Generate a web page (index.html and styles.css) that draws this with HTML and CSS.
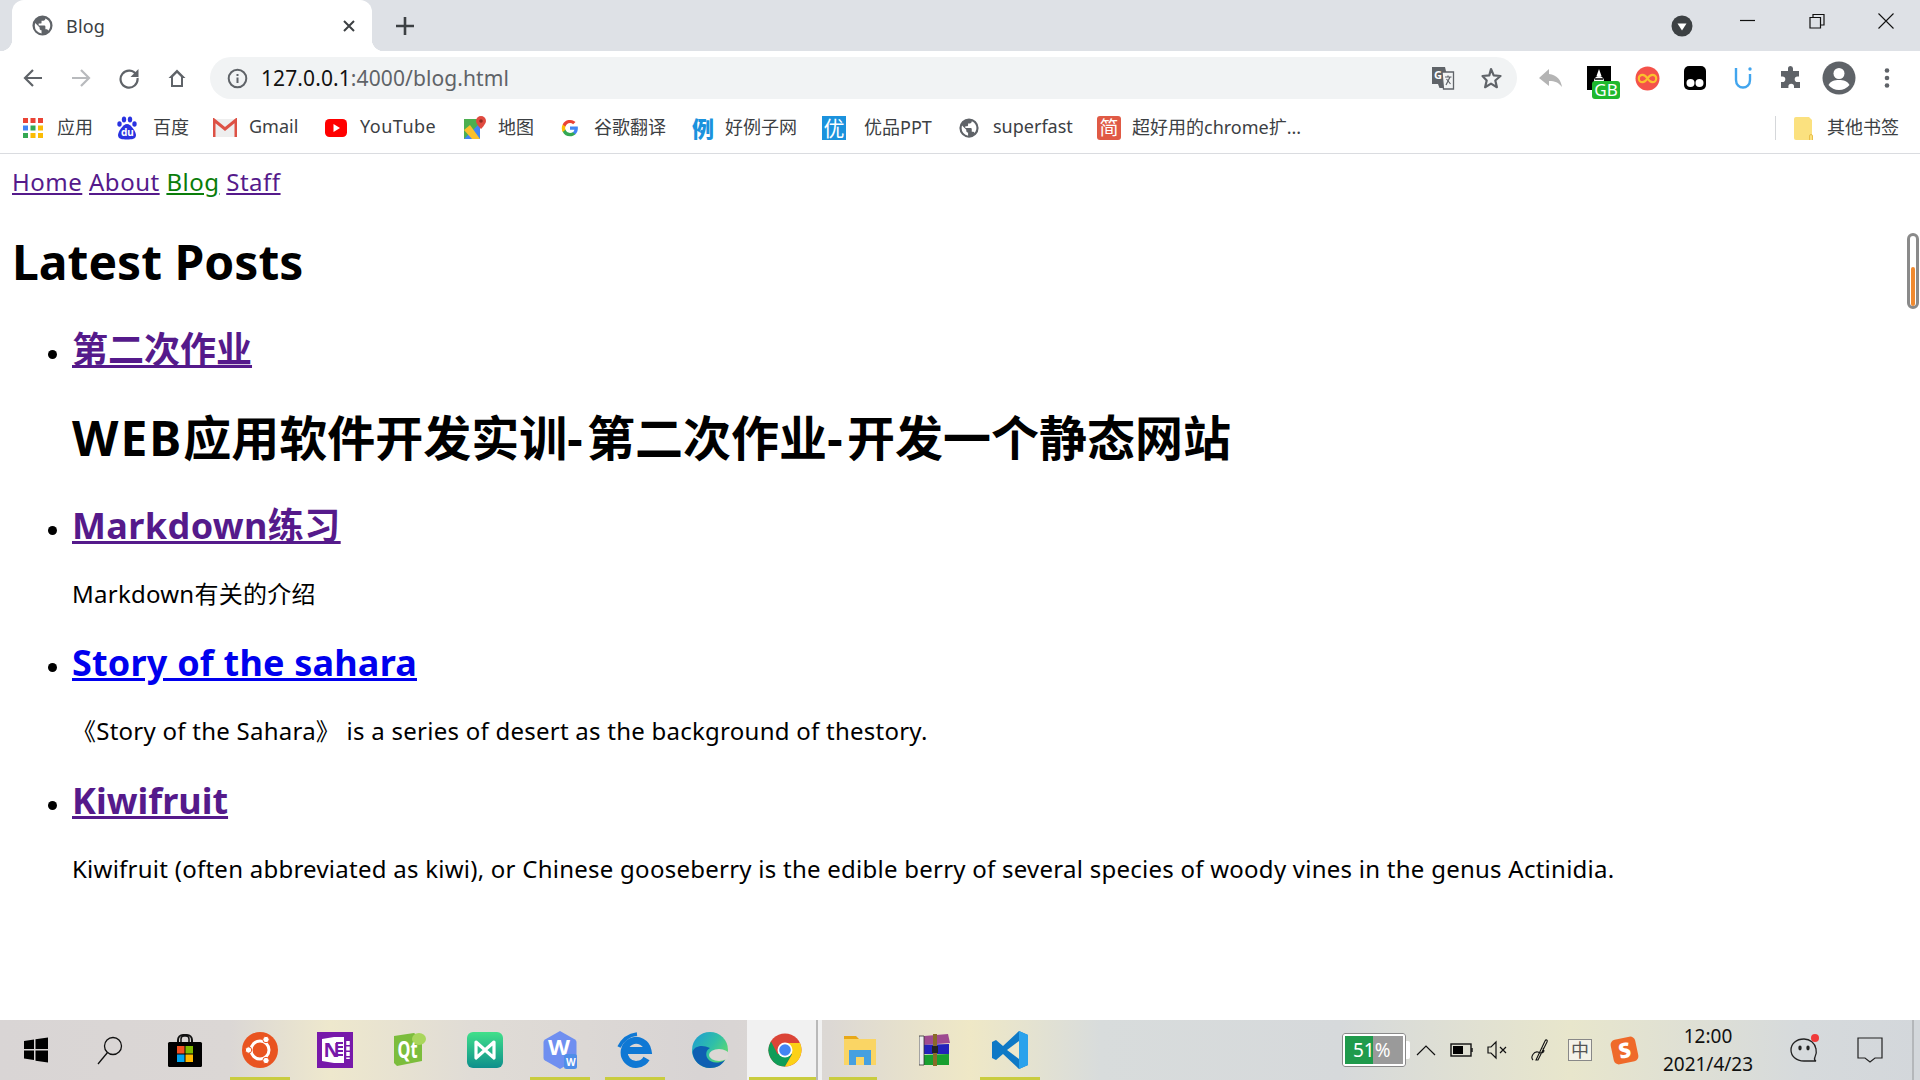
FILE: index.html
```html
<!DOCTYPE html>
<html lang="zh-CN">
<head>
<meta charset="utf-8">
<title>Blog</title>
<link rel="stylesheet" href="styles.css">
</head>
<body>
<div class="chrome">
  <div class="tabstrip">
    <div class="tab">
      <svg class="tab-fav" width="23" height="23" viewBox="0 0 24 24"><path fill="#5f6368" d="M12 1.500a10.500 10.500 0 1 0 0 21 10.500 10.500 0 0 0 0-21zM4 12c0-.9.2-1.800.4-2.600L9 14v1c0 1.100.9 2 2 2v3.400A8 8 0 0 1 4 12zm14 5.400c-.3-.8-1-1.400-1.900-1.400H15v-3c0-.6-.4-1-1-1H8v-2h2c.6 0 1-.4 1-1V7h2c1.100 0 2-.9 2-2v-.4a8 8 0 0 1 3 12.800z"/></svg>
      <span class="tab-title">Blog</span>
      <svg class="tab-close" width="14" height="14" viewBox="0 0 14 14"><path d="M2 2l10 10M12 2L2 12" stroke="#3c4043" stroke-width="2" fill="none"/></svg>
    </div>
    <svg class="newtab" width="20" height="20" viewBox="0 0 20 20"><path d="M10 1v18M1 10h18" stroke="#3c4043" stroke-width="2.600" fill="none"/></svg>
    <div class="tab-search">
      <svg width="22" height="22" viewBox="0 0 22 22"><circle cx="11" cy="11" r="10.500" fill="#3c4043"/><path d="M6.500 8.500h9L11 15.500z" fill="#fff"/></svg>
    </div>
    <div class="caption">
      <svg width="16" height="16" viewBox="0 0 16 16"><path d="M0 7.500h15" stroke="#111" stroke-width="1.200"/></svg>
    </div>
    <div class="caption">
      <svg width="16" height="16" viewBox="0 0 16 16"><path d="M1 4.500h10.500V15H1zM4 4.500V1.500h11V12h-3.500" stroke="#111" stroke-width="1.200" fill="none"/></svg>
    </div>
    <div class="caption">
      <svg width="16" height="16" viewBox="0 0 16 16"><path d="M.5.500l15 15M15.500.500l-15 15" stroke="#111" stroke-width="1.100" fill="none"/></svg>
    </div>
  </div>

  <div class="toolbar">
    <div class="tool-btn"><svg width="22" height="22" viewBox="0 0 22 22"><path d="M20 11H3M11 3l-8 8 8 8" stroke="#5f6368" stroke-width="2.200" fill="none"/></svg></div>
    <div class="tool-btn"><svg width="22" height="22" viewBox="0 0 22 22"><path d="M2 11h17M11 3l8 8-8 8" stroke="#b8babd" stroke-width="2.200" fill="none"/></svg></div>
    <div class="tool-btn"><svg width="22" height="22" viewBox="0 0 22 22"><path d="M18.500 8A8.500 8.500 0 1 0 19.500 11" stroke="#5f6368" stroke-width="2.200" fill="none"/><path d="M20.500 2v8h-8z" fill="#5f6368"/></svg></div>
    <div class="tool-btn"><svg width="22" height="22" viewBox="0 0 22 22"><path d="M11 2.500L2.500 11H5v9h12v-9h2.500zM7 18v-8l4-4 4 4v8z" fill="#5f6368"/></svg></div>
    <div class="omnibox">
      <svg class="omni-info" width="21" height="21" viewBox="0 0 21 21"><circle cx="10.500" cy="10.500" r="8.800" stroke="#5f6368" stroke-width="2" fill="none"/><path d="M10.500 9.500v5.500M10.500 6v2" stroke="#5f6368" stroke-width="2"/></svg>
      <span class="url"><span class="url-host">127.0.0.1</span>:4000/blog.html</span>
      <svg class="omni-trans" width="24" height="24" viewBox="0 0 24 24"><path d="M1 1h13l5 21H8.500L7 18H1z" fill="#5f6368"/><path d="M11 6h11.500v17H12.500z" fill="#f1f3f4" stroke="#5f6368" stroke-width="1.300"/><text class="trans-g" x="3" y="13">G</text><path d="M14 11h6.500M17 9.500v1.500M15 19l4-8M15.500 13l4 5" stroke="#5f6368" stroke-width="1.200" fill="none"/></svg>
      <svg class="omni-star" width="24" height="24" viewBox="0 0 24 24"><path d="M12 3l2.700 6.400 6.800.6-5.200 4.500 1.600 6.700-5.900-3.600-5.900 3.600 1.600-6.700L3.500 10l6.800-.6z" stroke="#5f6368" stroke-width="2.200" fill="none" stroke-linejoin="round"/></svg>
    </div>
    <div class="tool-btn"><svg width="26" height="24" viewBox="0 0 26 24"><path d="M11 3L1 12l10 8v-5c6 0 9.500 1.500 13 6-1-7-5-12-13-13z" fill="#b4b4b4"/></svg></div>
    <div class="tool-btn ext-gb">
      <svg width="24" height="24" viewBox="0 0 24 24"><rect width="24" height="24" fill="#000"/><path d="M12 3l2.500 7h-5zM7 15a5 5 0 0 1 10 0v6H7z" fill="#fff"/><path d="M8 13h8" stroke="#000" stroke-width="1.500"/></svg>
      <span class="gb-badge">GB</span>
    </div>
    <div class="tool-btn"><svg width="25" height="25" viewBox="0 0 25 25"><circle cx="12.500" cy="12.500" r="12" fill="#f4524a"/><path d="M12.500 12.500c-2-3-3.500-3.700-5-3.700a3.700 3.700 0 0 0 0 7.400c1.500 0 3-.7 5-3.700s3.500-3.700 5-3.700a3.700 3.700 0 0 1 0 7.400c-1.500 0-3-.7-5-3.700z" stroke="#fbc02d" stroke-width="2.200" fill="none"/></svg></div>
    <div class="tool-btn"><svg width="24" height="26" viewBox="0 0 24 26"><rect x="1" y="1" width="22" height="24" rx="5" fill="#000"/><circle cx="7.500" cy="18" r="4" fill="#fff"/><circle cx="16.500" cy="18" r="4" fill="#fff"/></svg></div>
    <div class="tool-btn"><svg width="20" height="26" viewBox="0 0 20 26"><path d="M3 3v12c0 10 14 10 14 0V9" stroke="#41a5ee" stroke-width="2.400" fill="none"/><circle cx="17" cy="4" r="1.700" fill="#41a5ee"/></svg></div>
    <div class="tool-btn"><svg width="24" height="24" viewBox="0 0 24 24"><path d="M9 2.500a2.500 2.500 0 0 1 5 0V5h6v5.500h-1.500a2.800 2.800 0 0 0 0 5.600H21V22h-6v-1.500a2.800 2.800 0 0 0-5.600 0V22H2v-6h1.500a2.800 2.800 0 0 0 0-5.600H2V5h7z" fill="#5f6368"/></svg></div>
    <div class="tool-btn"><svg width="34" height="34" viewBox="0 0 34 34"><circle cx="17" cy="17" r="16.500" fill="#5f6368"/><circle cx="17" cy="12.500" r="5.500" fill="#fff"/><path d="M6.500 24c2-4 6-5 10.500-5s8.500 1 10.500 5a13.500 13.500 0 0 1-21 0z" fill="#fff"/></svg></div>
    <div class="tool-btn"><svg width="8" height="24" viewBox="0 0 8 24"><circle cx="4" cy="4.500" r="2.300" fill="#5f6368"/><circle cx="4" cy="12" r="2.300" fill="#5f6368"/><circle cx="4" cy="19.500" r="2.300" fill="#5f6368"/></svg></div>
  </div>

  <div class="bookmarks">
    <div class="bm bm-apps">
      <svg width="20" height="20" viewBox="0 0 20 20"><g fill="#ea4335"><rect width="5" height="5"/><rect x="7.500" width="5" height="5"/><rect x="15" width="5" height="5"/></g><g><rect y="7.500" width="5" height="5" fill="#4285f4"/><rect x="7.500" y="7.500" width="5" height="5" fill="#34a853"/><rect x="15" y="7.500" width="5" height="5" fill="#fbbc05"/></g><g><rect y="15" width="5" height="5" fill="#34a853"/><rect x="7.500" y="15" width="5" height="5" fill="#fbbc05"/><rect x="15" y="15" width="5" height="5" fill="#fbbc05"/></g></svg>
      <span>应用</span>
    </div>
    <div class="bm bm-baidu">
      <svg width="20" height="24" viewBox="0 0 20 24"><g fill="#2932e1"><ellipse cx="7" cy="3.500" rx="2.200" ry="3"/><ellipse cx="13" cy="3.500" rx="2.200" ry="3"/><ellipse cx="2.500" cy="8" rx="2.200" ry="2.800"/><ellipse cx="17.500" cy="8" rx="2.200" ry="2.800"/><path d="M10 8c4 0 9 8 9 11 0 4-4 4.500-9 4.500S1 23 1 19c0-3 5-11 9-11z"/></g></svg>
      <span class="du">du</span>
      <span>百度</span>
    </div>
    <div class="bm bm-gmail">
      <svg width="24" height="20" viewBox="0 0 24 20"><rect x="1" y="1" width="22" height="18" fill="#eee"/><path d="M1 19V2l11 9 11-9v17" stroke="#dd5145" stroke-width="3" fill="none"/></svg>
      <span>Gmail</span>
    </div>
    <div class="bm bm-yt">
      <svg width="22" height="18" viewBox="0 0 22 18"><rect width="22" height="18" rx="4.500" fill="#f00"/><path d="M8.500 5v8l6.500-4z" fill="#fff"/></svg>
      <span>YouTube</span>
    </div>
    <div class="bm bm-maps">
      <svg width="23" height="24" viewBox="0 0 23 24"><path d="M1 3h16v20H1z" fill="#4caf50"/><path d="M1 23L17 7v16z" fill="#4285f4"/><path d="M1 14l6-5 10 14H9z" fill="#fbc02d"/><path d="M18 0a5 5 0 0 1 5 5c0 3-5 8-5 8s-5-5-5-8a5 5 0 0 1 5-5z" fill="#e04a3f"/><circle cx="18" cy="5" r="1.800" fill="#8f2a22"/></svg>
      <span>地图</span>
    </div>
    <div class="bm bm-g">
      <svg width="18" height="18" viewBox="0 0 48 48"><path fill="#4285f4" d="M45 24.500c0-1.600-.1-3.100-.4-4.500H24v8.500h11.800a10 10 0 0 1-4.400 6.600v5.500h7.100C42.700 36.700 45 31.100 45 24.500z"/><path fill="#34a853" d="M24 46c5.900 0 10.900-2 14.500-5.400l-7.100-5.500c-2 1.300-4.500 2.100-7.400 2.100-5.700 0-10.500-3.800-12.200-9H4.500v5.700A22 22 0 0 0 24 46z"/><path fill="#fbbc05" d="M11.800 28.700a13 13 0 0 1 0-8.400v-5.700H4.500a22 22 0 0 0 0 19.800z"/><path fill="#ea4335" d="M24 10.900c3.200 0 6.100 1.100 8.400 3.300l6.300-6.300A22 22 0 0 0 4.500 14.600l7.300 5.700c1.700-5.200 6.500-9.400 12.200-9.400z"/></svg>
      <span>谷歌翻译</span>
    </div>
    <div class="bm bm-li">
      <span class="glyph-li">例</span>
      <span>好例子网</span>
    </div>
    <div class="bm bm-you">
      <span class="glyph-you">优</span>
      <span>优品PPT</span>
    </div>
    <div class="bm bm-sf">
      <svg width="22" height="22" viewBox="0 0 24 24"><path fill="#5f6368" d="M12 1.500a10.500 10.500 0 1 0 0 21 10.500 10.500 0 0 0 0-21zM4 12c0-.9.2-1.800.4-2.600L9 14v1c0 1.100.9 2 2 2v3.400A8 8 0 0 1 4 12zm14 5.400c-.3-.8-1-1.400-1.900-1.400H15v-3c0-.6-.4-1-1-1H8v-2h2c.6 0 1-.4 1-1V7h2c1.100 0 2-.9 2-2v-.4a8 8 0 0 1 3 12.800z"/></svg>
      <span>superfast</span>
    </div>
    <div class="bm bm-jian">
      <span class="glyph-jian">简</span>
      <span>超好用的chrome扩...</span>
    </div>
    <div class="bm-sep"></div>
    <div class="bm bm-other">
      <svg width="19" height="23" viewBox="0 0 19 23"><path d="M2 0h13l3 3v20H2a2 2 0 0 1-2-2V2a2 2 0 0 1 2-2z" fill="#fbe17f"/><path d="M15.500 23v-4a1.500 1.500 0 0 1 3 0v4" fill="none" stroke="#e9bf4b"/></svg>
      <span>其他书签</span>
    </div>
  </div>
</div>

<main class="page">
  <nav class="nav">
    <a class="visited" href="#home">Home</a>
    <a class="visited" href="#about">About</a>
    <a class="active" href="#blog">Blog</a>
    <a class="visited" href="#staff">Staff</a>
  </nav>
  <h1 class="heading">Latest Posts</h1>
  <ul class="posts">
    <li>
      <h2 class="post-title"><a class="visited" href="#p1">第二次作业</a></h2>
      <h1 class="heading"><span class="latin-w">WEB</span>应用软件开发实训<span class="hy">-</span>第二次作业<span class="hy">-</span>开发一个静态网站</h1>
    </li>
    <li>
      <h2 class="post-title"><a class="visited md" href="#p2">Markdown练习</a></h2>
      <p class="excerpt">Markdown有关的介绍</p>
    </li>
    <li>
      <h2 class="post-title"><a class="fresh" href="#p3">Story of the sahara</a></h2>
      <p class="excerpt">《Story of the Sahara》 is a series of desert as the background of thestory.</p>
    </li>
    <li>
      <h2 class="post-title"><a class="visited" href="#p4">Kiwifruit</a></h2>
      <p class="excerpt">Kiwifruit (often abbreviated as kiwi), or Chinese gooseberry is the edible berry of several species of woody vines in the genus Actinidia.</p>
    </li>
  </ul>
  <div class="scroll-thumb"><div class="scroll-fill"></div></div>
</main>

<footer class="taskbar">
  <div class="tb-start"><svg width="26" height="26" viewBox="0 0 26 26"><path d="M1 4l10-1.500V12H1zM12.500 2.300L25 .5V12H12.500zM1 13.500h10V23L1 21.500zM12.500 13.500H25v12l-12.500-1.800z" fill="#000"/></svg></div>
  <div class="tb-search"><svg width="26" height="30" viewBox="0 0 26 30"><circle cx="16" cy="11" r="8.500" stroke="#111" stroke-width="1.300" fill="none"/><path d="M10.500 17.500L1 29" stroke="#111" stroke-width="1.300"/></svg></div>
  <div class="tb-app"><svg width="36" height="36" viewBox="0 0 36 36"><path d="M11 11V8a5 5 0 0 1 5-5h4a5 5 0 0 1 5 5v3" stroke="#111" stroke-width="2" fill="none"/><path d="M14 11V7a3 3 0 0 1 3-3h2a3 3 0 0 1 3 3v4" stroke="#111" stroke-width="1.500" fill="none"/><rect x="1" y="10" width="34" height="25" rx="1.500" fill="#000"/><rect x="10" y="14" width="7.500" height="7.500" fill="#f25022"/><rect x="18.500" y="14" width="7.500" height="7.500" fill="#7fba00"/><rect x="10" y="22.500" width="7.500" height="7.500" fill="#00a4ef"/><rect x="18.500" y="22.500" width="7.500" height="7.500" fill="#ffb900"/></svg></div>
  <div class="tb-app on"><svg width="36" height="36" viewBox="0 0 36 36"><circle cx="18" cy="18" r="18" fill="#e95420"/><circle cx="18" cy="18" r="9" stroke="#fff" stroke-width="3" fill="none"/><circle cx="6.500" cy="18" r="3.200" fill="#fff" stroke="#e95420"/><circle cx="24" cy="7.500" r="3.200" fill="#fff" stroke="#e95420"/><circle cx="24" cy="28.500" r="3.200" fill="#fff" stroke="#e95420"/></svg></div>
  <div class="tb-app"><svg width="36" height="36" viewBox="0 0 36 36"><rect width="36" height="36" fill="#7719aa"/><path d="M5 7l12-2h10v26H17L5 29z" fill="#fff"/><path d="M31 9v18" stroke="#fff" stroke-width="3.500" stroke-dasharray="4 1.500"/><path d="M19 11h7M19 15h7M19 19h7M19 23h7" stroke="#7719aa" stroke-width="1.800"/><text class="on-n" x="6.500" y="25">N</text></svg></div>
  <div class="tb-app"><svg width="36" height="36" viewBox="0 0 36 36"><path d="M2 4L22 1l8 6v22L5 34l-3-3z" fill="#7cbd3c"/><ellipse cx="27" cy="7" rx="7" ry="6" fill="#a9d65c"/><text class="qt-t" x="5.500" y="26" textLength="20" lengthAdjust="spacingAndGlyphs">Qt</text></svg></div>
  <div class="tb-app"><svg width="36" height="36" viewBox="0 0 36 36"><defs><linearGradient id="nim" x1="0" y1="0" x2="0" y2="1"><stop offset="0" stop-color="#41e08a"/><stop offset="1" stop-color="#0e8f8c"/></linearGradient></defs><rect width="36" height="36" rx="6" fill="url(#nim)"/><path d="M9 10L27 26V10L9 26z" stroke="#fff" stroke-width="3.200" fill="none" stroke-linejoin="round"/></svg></div>
  <div class="tb-app on"><svg width="34" height="38" viewBox="0 0 34 38"><path d="M17 0l15 8.500q1.500 1 1.500 2.500v16q0 1.500-1.500 2.500L17 38 2 29.500Q.5 28.500.5 27V11q0-1.500 1.500-2.500z" fill="#6f8ff0"/><text class="wps-w" x="5" y="24" textLength="22" lengthAdjust="spacingAndGlyphs">W</text><rect x="21" y="23" width="13" height="15" rx="2.500" fill="#4f8ee8"/><text class="wps-s" x="23" y="35">W</text></svg></div>
  <div class="tb-app on"><svg width="36" height="36" viewBox="0 0 36 36"><path d="M2 15C6 7 12 3 20 2" stroke="#0f78d4" stroke-width="3.500" fill="none"/><path d="M29.500 26.500A12 12 0 1 1 31 18.500H8.500" stroke="#0f78d4" stroke-width="7" fill="none"/></svg></div>
  <div class="tb-app"><svg width="36" height="36" viewBox="0 0 36 36"><defs><linearGradient id="edge" x1="0" y1="0" x2="1" y2=".7"><stop offset="0" stop-color="#1d9ad6"/><stop offset=".55" stop-color="#2fbfa8"/><stop offset="1" stop-color="#66dc68"/></linearGradient></defs><circle cx="18" cy="18" r="18" fill="url(#edge)"/><ellipse cx="27" cy="23" rx="10" ry="6" fill="#dcd8d5"/><path d="M.5 20C1 29 9 36 18 36c7 0 12-3 15-8-7 4-14 3-17-1-3-4-2-9 2-11C10 12 2 14 .5 20z" fill="#0e5fb2"/></svg></div>
  <div class="tb-app active"><svg width="34" height="34" viewBox="0 0 34 34"><circle cx="17" cy="17" r="16.500" fill="#db4437"/><path d="M17 17L2.800 25.500A16.500 16.500 0 0 0 17 33.500l7-12z" fill="#0f9d58"/><path d="M3 8.500A16.500 16.500 0 0 0 2.800 25.500L10 22z" fill="#0f9d58"/><path d="M17 10h15a16.500 16.500 0 0 1-15 23.500l7-12z" fill="#fcd116"/><circle cx="17" cy="17" r="7.500" fill="#fff"/><circle cx="17" cy="17" r="5.800" fill="#4285f4"/></svg></div>
  <div class="tb-divider"></div>
  <div class="tb-app on-short"><svg width="32" height="32" viewBox="0 0 32 32"><path d="M0 2h12l3 3H0z" fill="#e8a818"/><rect y="5" width="32" height="26" fill="#fad564"/><path d="M5 31V16h22v15h-7v-8h-8v8z" fill="#46a0e0"/></svg></div>
  <div class="tb-app"><svg width="32" height="34" viewBox="0 0 32 34"><path d="M5 3l24-2 2 9-26 2z" fill="#9e4a90"/><path d="M1 12l29-1v10H1z" fill="#2222bb"/><path d="M1 22l29-1v11H1z" fill="#18a030"/><path d="M0 3h5v29H0z" fill="#eee" stroke="#333" stroke-width=".8"/><path d="M14 1h4v32h-4z" fill="#8a6a28"/><rect x="13" y="13" width="6" height="7" fill="#222"/></svg></div>
  <div class="tb-app on"><svg width="36" height="38" viewBox="0 0 36 38"><path d="M27 0l9 4v30l-9 4L11 23l-7 6-4-2V11l4-2 7 6z" fill="#0e79c6"/><path d="M27 0l9 4v30l-9 4z" fill="#2ba2ec"/><path d="M27 10L15 19l12 9z" fill="#ece8cc"/></svg></div>
  <div class="tray">
    <div class="batt"><div class="batt-fill"></div><span class="batt-text">51%</span><i class="batt-nub"></i></div>
    <div class="t36"><svg width="20" height="12" viewBox="0 0 20 12"><path d="M1 11l9-9 9 9" stroke="#111" stroke-width="1.200" fill="none"/></svg></div>
    <div class="t36"><svg width="24" height="14" viewBox="0 0 24 14"><rect x="1" y="1" width="20" height="12" fill="none" stroke="#111" stroke-width="1.400"/><rect x="3" y="3" width="10" height="8" fill="#000"/><path d="M22 5v4" stroke="#111" stroke-width="1.400"/></svg></div>
    <div class="t36"><svg width="22" height="20" viewBox="0 0 22 20"><path d="M1 7v6h3l5 5V2L4 7z" stroke="#111" stroke-width="1.200" fill="none"/><path d="M13 7l6 6M19 7l-6 6" stroke="#111" stroke-width="1.200"/></svg></div>
    <div class="t50"><svg width="22" height="24" viewBox="0 0 22 24"><path d="M3 22c-3-3 1-9 5-8l2 1c4 0 5-2 3-5M6 22L15 3c1-2 3-1 2 1L8 22z" stroke="#111" stroke-width="1.100" fill="none"/></svg></div>
    <div class="t28 zh"><span>中</span></div>
    <div class="t60"><div class="sogou"><span>S</span></div></div>
    <div class="clock"><span>12:00</span><span>2021/4/23</span></div>
    <div class="t86"><svg width="32" height="32" viewBox="0 0 32 32"><path d="M15 5C7 5 2 10 2 16s5 11 13 11h12c-2-1-2-2-1-4 1-2 2-4 1-8-1-6-6-10-12-10z" stroke="#222" stroke-width="1.300" fill="none"/><ellipse cx="11" cy="14" rx="1.700" ry="2.400" fill="#222"/><ellipse cx="19" cy="14" rx="1.700" ry="2.400" fill="#222"/><circle cx="26" cy="4" r="4" fill="#f03a3a"/></svg></div>
    <div class="t44"><svg width="26" height="26" viewBox="0 0 26 26"><path d="M1 1h24v20h-7l-5 4-5-4H1z" stroke="#222" stroke-width="1.200" fill="none"/></svg></div>
    <div class="desk-line"></div>
  </div>
</footer>
</body>
</html>
```

FILE: styles.css
```css
* { box-sizing: border-box; }
html, body { margin: 0; height: 100%; }
body {
  display: flex;
  flex-direction: column;
  height: 100vh;
  overflow: hidden;
  background: #fff;
  font-family: "Noto Sans", "Noto Sans CJK SC", sans-serif;
  color: #000;
}
svg { display: block; flex: none; }
svg text { font-family: "Noto Sans", sans-serif; }

/* browser chrome */
.chrome { flex: none; }
.tabstrip { display: flex; align-items: center; height: 51px; background: #dee1e6; }
.tab {
  position: relative;
  display: flex;
  align-items: center;
  width: 360px;
  height: 51px;
  margin: 0 0 0 12px;
  padding: 0 16px 0 19px;
  background: #fff;
  border-radius: 12px 12px 0 0;
}
.tab::before, .tab::after {
  content: "";
  position: absolute;
  bottom: 0;
  width: 12px;
  height: 12px;
}
.tab::before { left: -12px; background: radial-gradient(circle at 0 0, transparent 12px, #fff 12.500px); }
.tab::after { right: -12px; background: radial-gradient(circle at 100% 0, transparent 12px, #fff 12.500px); }
.tab-fav { margin-right: 12px; }
.tab-title { flex: 1; font-size: 18px; letter-spacing: .2px; color: #3c4043; }
.newtab { margin-left: 23px; }
.tab-search { display: flex; justify-content: center; margin-left: auto; margin-right: 10px; width: 42px; }
.caption { display: flex; justify-content: center; align-items: center; width: 69px; height: 40px; margin-bottom: 10px; }

.toolbar { display: flex; align-items: center; height: 52px; padding: 2px 9px 0; background: #fff; }
.tool-btn { display: flex; justify-content: center; align-items: center; width: 48px; height: 48px; position: relative; }
.omnibox {
  flex: 1;
  display: flex;
  align-items: center;
  height: 42px;
  margin: 0 10px 0 9px;
  padding: 0 14px 0 17px;
  background: #f1f3f4;
  border-radius: 21px;
}
.omni-info { margin-right: 13px; }
.url { flex: 1; font-size: 21px; letter-spacing: .1px; color: #5f6368; }
.url-host { color: #111; }
.trans-g { font-size: 11px; font-weight: 700; fill: #fff; }
.omni-star { margin-left: 24px; }
.gb-badge {
  position: absolute;
  left: 17px;
  top: 27px;
  width: 28px;
  height: 18px;
  background: #1fb82d;
  border-radius: 3px;
  color: #fff;
  font-size: 17px;
  line-height: 18px;
  text-align: center;
}

.bookmarks {
  display: flex;
  align-items: center;
  height: 51px;
  padding-left: 23px;
  background: #fff;
  border-bottom: 1px solid #dadce0;
  font-size: 18px;
  color: #3c4043;
}
.bm { display: flex; align-items: center; position: relative; flex: none; white-space: nowrap; }
.bm > span:last-child { margin-top: -4px; }
.bm-apps { width: 94px; gap: 14px; }
.bm-baidu { width: 96px; gap: 16px; }
.bm-gmail { width: 112px; gap: 12px; }
.bm-yt { width: 138px; gap: 13px; letter-spacing: .5px; }
.bm-maps { width: 98px; gap: 12px; }
.bm-g { width: 131px; gap: 15px; }
.bm-li { width: 130px; gap: 11px; }
.bm-you { width: 136px; gap: 18px; }
.bm-sf { width: 139px; gap: 13px; }
.bm-jian { width: 205px; gap: 11px; }
.du {
  position: absolute;
  left: 4px;
  top: 11px;
  color: #fff;
  font-size: 10px;
  line-height: 11px;
  font-weight: 700;
}
.glyph-li { color: #1b92dd; font-size: 22px; font-weight: 900; line-height: 24px; }
.glyph-you { width: 24px; height: 24px; background: #1b92dd; color: #fff; font-size: 21px; line-height: 24px; text-align: center; }
.glyph-jian { width: 24px; height: 24px; background: #e05a45; color: #fff; border-radius: 3px; font-size: 19px; line-height: 24px; text-align: center; }
.bm-sep { width: 1px; height: 24px; margin-left: auto; background: #d5d7da; }
.bm-other { margin: 0 21px 0 18px; gap: 14px; }

/* page */
.page {
  position: relative;
  flex: 1;
  min-height: 0;
  overflow: hidden;
  padding: 12px;
  font-size: 24px;
  line-height: 32px;
}
.nav { letter-spacing: .5px; }
.visited { color: #551a8b; }
.active { color: #0a7d0a; }
.fresh { color: #0000ee; letter-spacing: .2px; }
.md { letter-spacing: .4px; }
.heading { margin: 32px 0; font-size: 48px; line-height: 64px; font-weight: 700; }
.latin-w { letter-spacing: 2px; }
.hy { letter-spacing: 4.500px; }
.posts { margin: 0; padding: 0 0 0 60px; }
.post-title { margin: 30px 0 28px; font-size: 36px; line-height: 48px; font-weight: 700; }
.excerpt { margin: 24px 0 0; letter-spacing: .25px; }
.posts li + li .post-title { margin-top: 29px; }
.posts li:last-child .post-title { margin-top: 30px; }
.scroll-thumb {
  position: absolute;
  right: 1px;
  top: 79px;
  width: 12px;
  height: 76px;
  border: 3px solid #8a8a8a;
  border-radius: 6px;
  background: #fff;
}
.scroll-fill { width: 4px; height: 39px; margin: 31px 0 0 1px; background: #f08a30; border-radius: 2px; }

/* taskbar */
.taskbar {
  flex: none;
  display: flex;
  align-items: center;
  height: 60px;
  background: linear-gradient(90deg, #d9d5d5 0, #dbd7d5 230px, #eee8cd 330px, #e0dcd6 470px, #d8d4d4 700px, #dcd8d4 830px, #efe8c6 970px, #d8dcdc 1100px, #d6d9db 1340px, #e8e6cc 1570px, #d6dadc 1800px, #d3d7db 1920px);
}
.tb-start, .tb-search, .tb-app { display: flex; justify-content: center; align-items: center; height: 60px; position: relative; }
.tb-start { width: 72px; }
.tb-search { width: 75px; }
.tb-app { width: 75px; }
.tb-app.on::after, .tb-app.active::after, .tb-app.on-short::after {
  content: "";
  position: absolute;
  left: 8px;
  right: 7px;
  bottom: 0;
  height: 3px;
  background: #c9cc3f;
}
.tb-app.active { background: #f1f1f1; }
.tb-app.active::after { left: 2px; right: 6px; }
.tb-app.on-short::after { left: 7px; right: 20px; }
.tb-divider { flex: none; width: 2px; height: 60px; margin: 0 -2px 0 0; background: #b9b9b9; position: relative; left: -6px; }

.on-n { font-size: 20px; font-weight: 700; fill: #7719aa; }
.qt-t { font-size: 23px; font-weight: 700; fill: #fff; }
.wps-w { font-size: 21px; font-weight: 700; fill: #fff; }
.wps-s { font-size: 10px; font-weight: 700; fill: #fff; }

.tray { display: flex; align-items: center; margin-left: auto; height: 60px; font-size: 18px; color: #111; }
.tray > div { display: flex; justify-content: center; align-items: center; height: 60px; }
.tray > .batt {
  position: relative;
  justify-content: flex-start;
  width: 64px;
  height: 34px;
  margin-right: 2px;
  background: #9a9a9a;
  border: 3px solid #fff;
  outline: 1px solid #8a8a8a;
  outline-offset: -1px;
  border-radius: 3px;
}
.batt-fill { flex: none; width: 28px; height: 100%; background: #1f9a4c; }
.batt-text { position: absolute; left: 8px; top: 0; color: #fff; font-size: 19px; line-height: 28px; }
.batt-nub { position: absolute; right: -7px; top: 5px; width: 4px; height: 18px; background: #fff; border-radius: 0 2px 2px 0; }
.t36 { width: 36px; }
.t50 { width: 50px; }
.t28 { width: 28px; }
.t60 { width: 60px; }
.t86 { width: 86px; }
.t44 { width: 44px; }
.zh span { border: 1px solid #888; background: #f4f2e8; color: #555; font-size: 18px; line-height: 20px; padding: 0 2px; }
.sogou {
  width: 25px;
  height: 25px;
  background: #ef6a2a;
  border-radius: 5px;
  transform: rotate(-12deg);
  color: #fff;
  font-size: 21px;
  line-height: 25px;
  font-weight: 900;
  text-align: center;
}
.tray > .clock { flex-direction: column; width: 108px; font-size: 19px; line-height: 28px; }
.desk-line { width: 2px; margin-left: 20px; margin-right: 6px; background: #b4b7ba; }
```
